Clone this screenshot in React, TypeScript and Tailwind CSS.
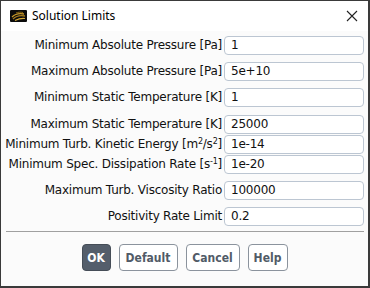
import React from "react";

const Sup = ({ children }: { children: React.ReactNode }) => (
  <span className="text-[8px] relative -top-[4px] leading-none">{children}</span>
);

const rows: { label: React.ReactNode; value: string; mt: string }[] = [
  { label: "Minimum Absolute Pressure [Pa]", value: "1", mt: "mt-[5px]" },
  { label: "Maximum Absolute Pressure [Pa]", value: "5e+10", mt: "mt-[8px]" },
  { label: "Minimum Static Temperature [K]", value: "1", mt: "mt-[8px]" },
  { label: "Maximum Static Temperature [K]", value: "25000", mt: "mt-[9px]" },
  {
    label: (
      <>
        Minimum Turb. Kinetic Energy [m<Sup>2</Sup>/s<Sup>2</Sup>]
      </>
    ),
    value: "1e-14",
    mt: "mt-[2px]",
  },
  {
    label: (
      <>
        Minimum Spec. Dissipation Rate [s<Sup>-1</Sup>]
      </>
    ),
    value: "1e-20",
    mt: "mt-[2px]",
  },
  { label: "Maximum Turb. Viscosity Ratio", value: "100000", mt: "mt-[8px]" },
  { label: "Positivity Rate Limit", value: "0.2", mt: "mt-[8px]" },
];

export default function App() {
  const font = { fontFamily: '"DejaVu Sans", sans-serif' };
  return (
    <div className="w-[370px] h-[288px] bg-[#fbfbfb] border-t border-l border-r-2 border-b-2 border-[#3a3a3a] flex flex-col overflow-hidden">
      <div className="h-[30px] bg-white flex items-center shrink-0">
        <svg width="17" height="12" viewBox="0 0 17 12" className="ml-[9px]">
          <rect x="0" y="0" width="17" height="12" rx="1" fill="#0c0c0c" />
          <path d="M2 7 C5 4, 9 3, 14 4" stroke="#c89a2a" strokeWidth="1.3" fill="none" />
          <path d="M3 9 C6 6, 10 5, 15 6" stroke="#a57a1c" strokeWidth="1.3" fill="none" />
          <path d="M5 10.5 C8 9, 11 8, 15 8.5" stroke="#d9ac3a" strokeWidth="1.1" fill="none" />
          <path d="M6 3 C8 2, 11 2, 13 2.5" stroke="#8a6614" strokeWidth="1" fill="none" />
        </svg>
        <span className="ml-[5px] text-[12px] text-black" style={{ fontFamily: '"Noto Sans", sans-serif' }}>
          Solution Limits
        </span>
        <svg width="12" height="12" viewBox="0 0 12 12" className="ml-auto mr-[10px]">
          <path d="M1 1 L11 11 M11 1 L1 11" stroke="#222" strokeWidth="1.1" />
        </svg>
      </div>
      <div className="flex flex-col" style={font}>
        {rows.map((r, i) => (
          <div key={i} className={`flex items-center h-[18px] ${r.mt}`}>
            <div className="w-[221px] text-right text-[12px] tracking-[-0.22px] text-[#111] whitespace-nowrap leading-[18px]">{r.label}</div>
            <div className="ml-[2px] w-[140px] h-[19px] bg-white border border-[#bcc6d2] rounded-[4px] flex items-center pl-[6px] text-[12px] tracking-[-0.22px] text-[#111]">
              {r.value}
            </div>
          </div>
        ))}
        <div className="mt-[6px] ml-[5px] w-[358px] h-px bg-[#a0a0a0]" />
        <div className="mt-[12px] flex justify-center gap-[8px]" style={{ fontFamily: '"DejaVu Sans Condensed", "DejaVu Sans", sans-serif' }}>
          <button className="h-[27px] w-[29px] rounded-[4px] bg-[#545e6b] border border-[#454d57] text-white text-[12px] font-bold">OK</button>
          <button className="h-[27px] w-[59px] rounded-[4px] bg-white border border-[#8b939d] text-[#515b67] text-[12px] font-bold">Default</button>
          <button className="h-[27px] w-[54px] rounded-[4px] bg-white border border-[#8b939d] text-[#515b67] text-[12px] font-bold">Cancel</button>
          <button className="h-[27px] w-[40px] rounded-[4px] bg-white border border-[#8b939d] text-[#515b67] text-[12px] font-bold">Help</button>
        </div>
      </div>
    </div>
  );
}
